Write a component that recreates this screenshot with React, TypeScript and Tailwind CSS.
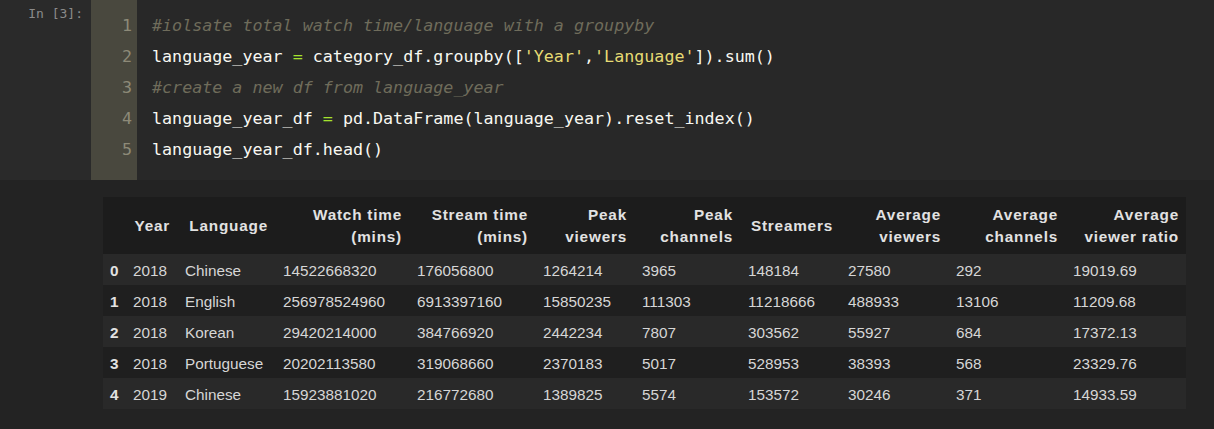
import React from 'react'

const COLS = 'grid grid-cols-[22px_52px_98px_134px_126px_99px_106px_100px_108px_117px_121px]'

const HEADERS = [
  '',
  'Year',
  'Language',
  'Watch time (mins)',
  'Stream time (mins)',
  'Peak viewers',
  'Peak channels',
  'Streamers',
  'Average viewers',
  'Average channels',
  'Average viewer ratio',
]

const HEADER_LINES: string[][] = [
  [],
  ['Year'],
  ['Language'],
  ['Watch time', '(mins)'],
  ['Stream time', '(mins)'],
  ['Peak', 'viewers'],
  ['Peak', 'channels'],
  ['Streamers'],
  ['Average', 'viewers'],
  ['Average', 'channels'],
  ['Average', 'viewer ratio'],
]

const ROWS = [
  ['0', '2018', 'Chinese', '14522668320', '176056800', '1264214', '3965', '148184', '27580', '292', '19019.69'],
  ['1', '2018', 'English', '256978524960', '6913397160', '15850235', '111303', '11218666', '488933', '13106', '11209.68'],
  ['2', '2018', 'Korean', '29420214000', '384766920', '2442234', '7807', '303562', '55927', '684', '17372.13'],
  ['3', '2018', 'Portuguese', '20202113580', '319068660', '2370183', '5017', '528953', '38393', '568', '23329.76'],
  ['4', '2019', 'Chinese', '15923881020', '216772680', '1389825', '5574', '153572', '30246', '371', '14933.59'],
]

const W = ({ children }: { children: React.ReactNode }) => <span className="text-[#f8f8f2]">{children}</span>
const Op = ({ children }: { children: React.ReactNode }) => <span className="text-[#a6e22e]">{children}</span>
const Str = ({ children }: { children: React.ReactNode }) => <span className="text-[#e6db74]">{children}</span>
const Cm = ({ children }: { children: React.ReactNode }) => <span className="italic text-[#6f6c5b]">{children}</span>

const CodeCell = () => {
  const lines: React.ReactNode[] = [
    <Cm>#iolsate total watch time/language with a groupyby</Cm>,
    <>
      <W>language_year </W>
      <Op>=</Op>
      <W> category_df.groupby([</W>
      <Str>'Year'</Str>
      <W>,</W>
      <Str>'Language'</Str>
      <W>]).sum()</W>
    </>,
    <Cm>#create a new df from language_year</Cm>,
    <>
      <W>language_year_df </W>
      <Op>=</Op>
      <W> pd.DataFrame(language_year).reset_index()</W>
    </>,
    <W>language_year_df.head()</W>,
  ]

  return (
    <div className="flex h-[180px] font-['DejaVu_Sans_Mono',monospace]">
      <div className="w-[91px] shrink-0 bg-[#2a2a2a] pr-[8px] pt-[6px] text-right text-[13px] leading-[16px] text-[#8a8a8a]">
        In [3]:
      </div>
      <div className="w-[46px] shrink-0 bg-[#49483e] pt-[10px] pr-[5px] text-right text-[16.7px] leading-[31px] text-[#8d8a78]">
        {lines.map((_, i) => (
          <div key={i}>{i + 1}</div>
        ))}
      </div>
      <div className="flex-1 bg-[#282828] pl-[15px] pt-[10px] text-[16.7px] leading-[31px] whitespace-pre">
        {lines.map((l, i) => (
          <div key={i}>{l}</div>
        ))}
      </div>
    </div>
  )
}

const OutputTable = () => {
  return (
    <div className="h-[249px] bg-[#232323] pl-[103px] pt-[17px] font-['Liberation_Sans',Arial,sans-serif]">
      <div className="w-[1083px]">
        <div className={`${COLS} h-[57px] bg-[#1c1c1c] text-[15.3px] font-bold leading-[22px] tracking-[0.8px] text-[#e2e2e2]`}>
          {HEADER_LINES.map((lines, i) => (
            <div key={HEADERS[i] || i} className="flex items-center justify-end pr-[7px] pl-2 text-right">
              <div>
                {lines.map((t) => (
                  <div key={t} className="whitespace-nowrap">{t}</div>
                ))}
              </div>
            </div>
          ))}
        </div>
        {ROWS.map((row, r) => (
          <div
            key={row[0]}
            className={`${COLS} h-[31px] items-center pt-[4px] text-[15.3px] text-[#d6d6d6] ${r % 2 === 0 ? 'bg-[#292929]' : 'bg-[#1f1f1f]'}`}
          >
            {row.map((cell, c) => (
              <div key={c} className={`pl-2 whitespace-nowrap ${c === 0 ? 'font-bold text-[#e2e2e2] pl-[7px]' : ''}`}>
                {cell}
              </div>
            ))}
          </div>
        ))}
      </div>
    </div>
  )
}

const App = () => {
  return (
    <div className="h-[429px] w-[1214px] overflow-hidden bg-[#232323]">
      <CodeCell />
      <OutputTable />
    </div>
  )
}

export default App
